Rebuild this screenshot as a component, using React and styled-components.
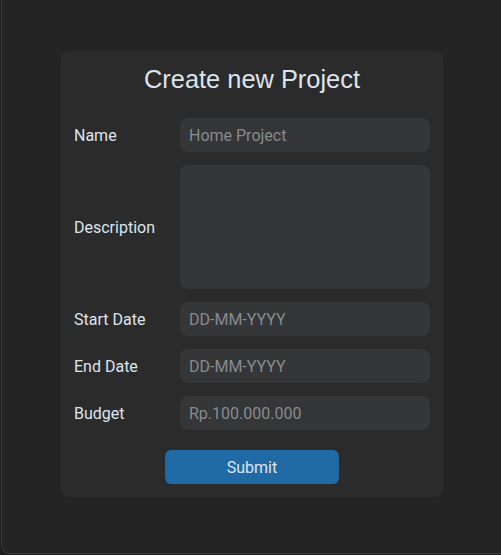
import React, { useState } from "react";
import styled, { createGlobalStyle } from "styled-components";

const GlobalStyle = createGlobalStyle`
  html, body {
    margin: 0;
    padding: 0;
    background: #1d1d1d;
    overflow: hidden;
  }
  body {
    font-family: Roboto, "Liberation Sans", sans-serif;
  }
`;

const fields = [
  { id: "name", label: "Name", placeholder: "Home Project" },
  { id: "description", label: "Description", multiline: true },
  { id: "start", label: "Start Date", placeholder: "DD-MM-YYYY" },
  { id: "end", label: "End Date", placeholder: "DD-MM-YYYY" },
  { id: "budget", label: "Budget", placeholder: "Rp.100.000.000" },
];

const App = () => {
  const [values, setValues] = useState({});

  const handleChange = (id) => (e) =>
    setValues({ ...values, [id]: e.target.value });

  const handleSubmit = (e) => {
    e.preventDefault();
  };

  return (
    <>
      <GlobalStyle />
      <Window>
        <Card onSubmit={handleSubmit}>
          <Title>Create new Project</Title>
          <Fields>
            {fields.map((f) => (
              <Row key={f.id}>
                <Label htmlFor={f.id}>{f.label}</Label>
                {f.multiline ? (
                  <TextArea
                    id={f.id}
                    value={values[f.id] || ""}
                    onChange={handleChange(f.id)}
                  />
                ) : (
                  <Input
                    id={f.id}
                    type="text"
                    placeholder={f.placeholder}
                    value={values[f.id] || ""}
                    onChange={handleChange(f.id)}
                  />
                )}
              </Row>
            ))}
          </Fields>
          <SubmitButton type="submit">Submit</SubmitButton>
        </Card>
      </Window>
    </>
  );
};

// window frame: only the left and bottom edges are visible in the shot
const Window = styled.div`
  box-sizing: border-box;
  margin-left: 1px;
  width: calc(100vw - 1px);
  height: 554px;
  padding: 51px 0 0 59px;
  background: #242424;
  border-left: 1px solid #393939;
  border-bottom: 1px solid #393939;
  border-bottom-left-radius: 8px;
`;

const Card = styled.form`
  box-sizing: border-box;
  width: 382px;
  display: flex;
  flex-direction: column;
  align-items: center;
  padding: 0 13px 13px;
  background: #2b2b2b;
  border-radius: 8px;
`;

const Title = styled.h1`
  margin: 13px 0 24px;
  font-family: "Liberation Sans", Arial, sans-serif;
  font-size: 25.4px;
  font-weight: 400;
  line-height: 30px;
  color: #dce4ee;
`;

const Fields = styled.div`
  width: 100%;
  display: flex;
  flex-direction: column;
  gap: 13px;
`;

const Row = styled.div`
  display: grid;
  grid-template-columns: 106px 250px;
  align-items: center;
`;

const Label = styled.label`
  font-size: 16px;
  color: #dce4ee;
`;

const fieldBase = `
  box-sizing: border-box;
  width: 250px;
  border: none;
  outline: none;
  border-radius: 8px;
  background: #343638;
  color: #dce4ee;
  font-family: Roboto, "Liberation Sans", sans-serif;
  font-size: 16px;
  padding: 0 9px;
`;

const Input = styled.input`
  ${fieldBase}
  height: 34px;

  &::placeholder {
    color: #898b8d;
  }
`;

const TextArea = styled.textarea`
  ${fieldBase}
  height: 124px;
  padding: 8px 9px;
  resize: none;
  display: block;
`;

const SubmitButton = styled.button`
  margin-top: 20px;
  width: 174px;
  height: 34px;
  border: none;
  border-radius: 6px;
  background: #1f6aa5;
  color: #dce4ee;
  font-family: Roboto, "Liberation Sans", sans-serif;
  font-size: 16px;
  cursor: pointer;

  &:hover {
    background: #144870;
  }
`;

export default App;
